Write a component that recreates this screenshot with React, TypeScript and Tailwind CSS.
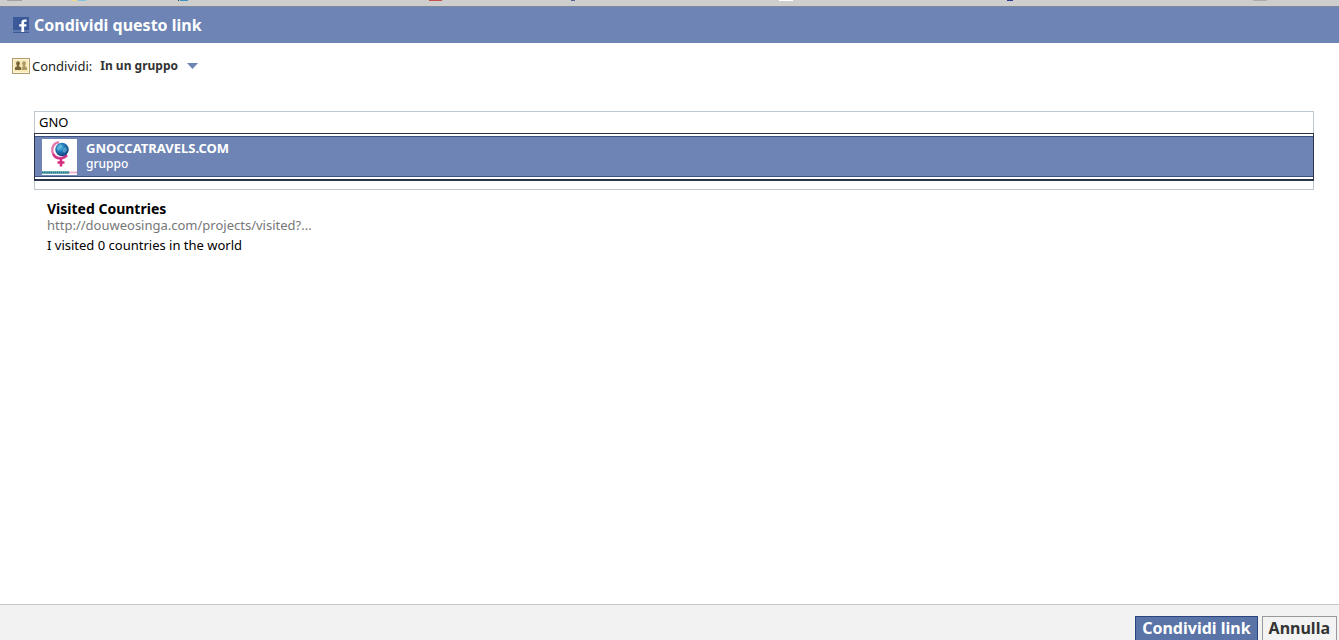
import { useState } from "react";

function BookmarkStrip() {
  return (
    <div className="h-[7px] shrink-0 overflow-hidden border-b border-[#7d8898] bg-[#cecece]">
      <svg width="1339" height="1" className="block" aria-hidden="true">
        <rect x="7" width="15" height="1" fill="#a3a3a3" />
        <rect x="72" width="5" height="1" fill="#ead98a" />
        <rect x="78" width="8" height="1" fill="#83c3dd" />
        <rect x="178" width="1" height="1" fill="#25405c" />
        <rect x="180" width="8" height="1" fill="#3e93bd" />
        <rect x="429" width="13" height="1" fill="#c4504f" />
        <rect x="571" width="4" height="1" fill="#56648f" />
        <rect x="779" width="14" height="1" fill="#ffffff" />
        <rect x="1007" width="6" height="1" fill="#303a92" />
        <rect x="1253" width="14" height="1" fill="#ababab" />
      </svg>
    </div>
  );
}

function FacebookIcon() {
  return (
    <svg width="16" height="16" viewBox="0 0 16 16" aria-hidden="true">
      <rect width="16" height="16" fill="#3b5998" />
      <rect y="13" width="16" height="2" fill="#6079b0" />
      <path
        d="M8.4 15V9.6H6.2V7.3h2.2V5.6C8.4 3.6 9.6 2.5 11.6 2.5h2v2.3h-1.4c-.8 0-1.1.4-1.1 1.1v1.4h2.4l-.3 2.3h-2.1V15z"
        fill="#fff"
      />
    </svg>
  );
}

function GroupIcon() {
  return (
    <svg width="18" height="16" viewBox="0 0 18 16" aria-hidden="true">
      <rect x=".5" y=".5" width="17" height="15" fill="#f8e9b8" stroke="#b29b6c" />
      <rect x="1.5" y="1.5" width="15" height="13" fill="none" stroke="#fdf5d6" />
      <ellipse cx="6" cy="5.600" rx="1.900" ry="2.300" fill="#776538" />
      <path d="M3 12V10c0-1 .8-1.500 2.200-1.800V7h1.600v1.200C8.200 8.500 9 9 9 10v2z" fill="#776538" />
      <ellipse cx="12" cy="5.600" rx="1.900" ry="2.300" fill="#ae9a65" />
      <path d="M9.600 12V10c0-1 .5-1.500 1.600-1.800V7h1.600v1.200c1.400.3 2.200.8 2.200 1.800v2z" fill="#ae9a65" />
    </svg>
  );
}

function GroupThumbnail() {
  return (
    <svg width="35" height="36" viewBox="0 0 35 36" className="shrink-0" aria-hidden="true">
      <defs>
        <radialGradient id="globe" cx="40%" cy="35%" r="65%">
          <stop offset="0" stopColor="#54b9e3" />
          <stop offset=".5" stopColor="#2277b4" />
          <stop offset="1" stopColor="#133f7c" />
        </radialGradient>
      </defs>
      <rect width="35" height="36" fill="#fff" />
      <path
        d="M17 3.200C12 3.700 9.600 8 10.400 12.800c1 4.600 5.300 7 9.600 6.200 2-.4 3.700-1.400 4.700-2.800"
        fill="none"
        stroke="#e27cae"
        strokeWidth="2.600"
      />
      <path d="M11 15c1.600 3.200 5.200 4.900 9 4.100 2.200-.4 3.900-1.500 5-2.900" fill="none" stroke="#cf3387" strokeWidth="2.200" />
      <circle cx="20" cy="10.500" r="6.700" fill="url(#globe)" />
      <path d="M15.500 7l3-2 2 2-2 2-2 3-2-2zM21 10l3-2 1 3-2 3-2-1z" fill="#7ac9e4" opacity=".5" />
      <path d="M19 19.500V27.500M15.500 23.500h7" stroke="#d62b7f" strokeWidth="2.600" />
      <path d="M0 33.500h27" stroke="#9fcbd0" strokeWidth="3" />
      <path d="M0 33.500h27" stroke="#1f7785" strokeWidth="2" strokeDasharray="1.600 .5" />
      <path d="M27 33.500h8" stroke="#e39abc" strokeWidth="2" strokeDasharray="1.600 .5" />
    </svg>
  );
}

export default function App() {
  const [query, setQuery] = useState("GNO");

  return (
    <div className="flex h-screen flex-col overflow-hidden bg-white font-['Noto_Sans','Open_Sans',sans-serif] text-[13px] text-[#333]">
      <BookmarkStrip />
      <header className="flex h-9 shrink-0 items-center gap-[5px] bg-[#6d84b4] px-[13px]">
        <FacebookIcon />
        <h1 className="text-[16px] leading-5 font-bold text-white">Condividi questo link</h1>
      </header>

      <main className="flex-1">
        <div className="flex items-center px-3 pt-[11px]">
          <GroupIcon />
          <label htmlFor="audience" className="ml-[2px] leading-6 text-[#222]">
            Condividi:
          </label>
          <div className="relative ml-2">
            <select
              id="audience"
              className="block appearance-none bg-transparent pr-5 text-[12px] leading-6 font-bold text-[#333] outline-none"
            >
              <option>In un gruppo</option>
            </select>
            <svg
              width="11"
              height="6"
              viewBox="0 0 11 6"
              className="pointer-events-none absolute top-[9px] right-0"
              aria-hidden="true"
            >
              <path d="M0 0h11L5.500 6z" fill="#6d84b4" />
            </svg>
          </div>
        </div>

        <div className="mt-[33px] mr-[25px] ml-[34px] border border-[#bdc7cd] pb-2">
          <input
            type="text"
            aria-label="Gruppo"
            value={query}
            onChange={(event) => setQuery(event.target.value)}
            className="block h-[21px] w-full px-1 pb-[2px] text-[13px] text-black outline-none"
          />
          <ul className="-mx-px border border-b-2 border-[#2c3548] py-[2px]" role="listbox" aria-label="Gruppi">
            <li
              role="option"
              aria-selected="true"
              className="flex h-[41px] items-center gap-[9px] border-y border-[#3b5082] bg-[#6d84b4] px-[7px] text-white"
            >
              <GroupThumbnail />
              <div className="pb-[2px] leading-4">
                <div className="text-[13px] font-bold">GNOCCATRAVELS.COM</div>
                <div className="text-[12px] font-medium">gruppo</div>
              </div>
            </li>
          </ul>
        </div>

        <section className="mt-[11px] px-[47px]">
          <h2 className="text-[14px] leading-4 font-bold text-black">Visited Countries</h2>
          <p className="text-[13px] leading-4 text-[#777]">http://douweosinga.com/projects/visited?...</p>
          <p className="mt-1 text-[13px] leading-4 text-black">I visited 0 countries in the world</p>
        </section>
      </main>

      <footer className="flex h-9 shrink-0 items-start justify-end gap-1 border-t border-[#c8c8c8] bg-[#f2f2f2] pt-[11px] pr-[2px]">
        <button
          type="button"
          className="h-7 shrink-0 border border-[#29447e] bg-[#5b74a8] px-[6px] pb-1 text-[16px] leading-5 font-bold text-white"
        >
          Condividi link
        </button>
        <button
          type="button"
          className="h-7 shrink-0 border border-[#999] bg-[#f3f3f3] px-[6px] pb-1 text-[16px] leading-5 font-bold text-[#333]"
        >
          Annulla
        </button>
      </footer>
    </div>
  );
}
